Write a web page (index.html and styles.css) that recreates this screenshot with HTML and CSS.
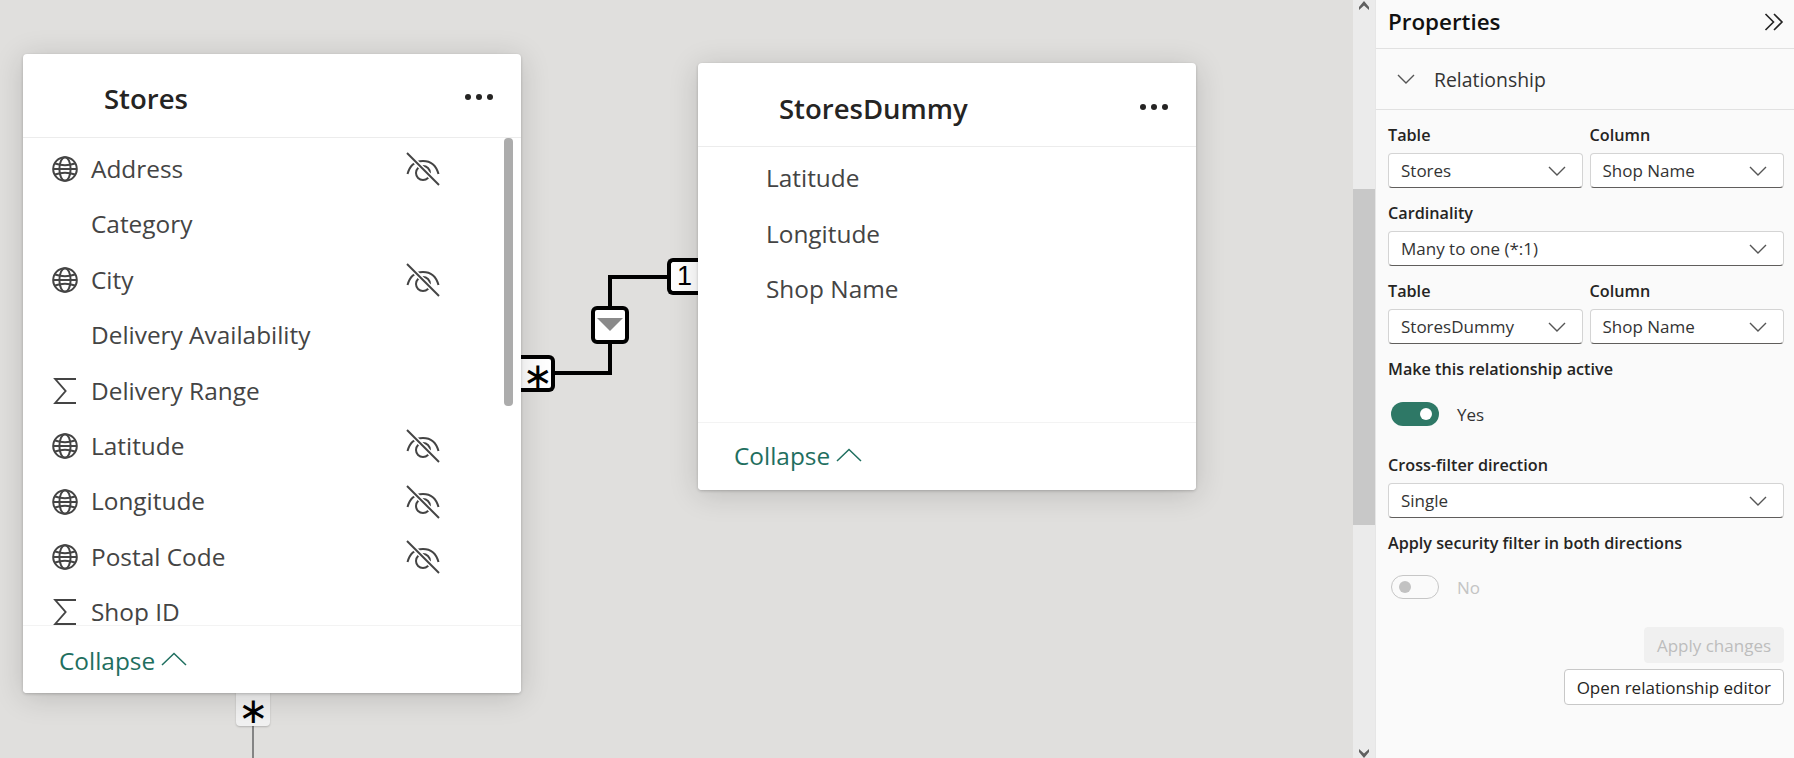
FILE: index.html
```html
<!DOCTYPE html>
<html lang="en">
<head>
<meta charset="utf-8">
<title>Model view - Properties</title>
<link rel="stylesheet" href="styles.css">
</head>
<body>
<svg class="defs" width="0" height="0" aria-hidden="true">
  <symbol id="globe" viewBox="0 0 26 26">
    <g fill="none" stroke="#444" stroke-width="2">
      <circle cx="13" cy="13" r="11.8"/>
      <ellipse cx="13" cy="13" rx="5.6" ry="11.8"/>
      <path d="M3 7.5C9 9.6 17 9.6 23 7.5M3 18.5C9 16.4 17 16.4 23 18.5M1.2 13H24.8"/>
    </g>
  </symbol>
  <symbol id="sigma" viewBox="0 0 22 26">
    <path d="M22 1H1.2L11.6 13 1.2 25H22" fill="none" stroke="#444" stroke-width="1.9"/>
  </symbol>
  <symbol id="hidden" viewBox="0 0 34 34">
    <g fill="none" stroke-width="2">
      <path d="M1.5 22C4 13 10 9 17 9s13 4 15.500 13" stroke="#444"/>
      <circle cx="17" cy="21" r="7" stroke="#444"/>
      <path d="M1 1l32 32" stroke="#fff" stroke-width="5"/>
      <path d="M1 1l32 32" stroke="#444"/>
    </g>
  </symbol>
  <symbol id="chev" viewBox="0 0 18 10">
    <path d="M1 1l8 8 8-8" fill="none" stroke="#555" stroke-width="1.4"/>
  </symbol>
  <symbol id="up" viewBox="0 0 26 14">
    <path d="M1 13L13 1.500 25 13" fill="none" stroke="#1f6f5f" stroke-width="1.5"/>
  </symbol>
</svg>

<div class="app">
  <main class="canvas">
    <svg class="links" width="1353" height="758" aria-hidden="true">
      <path class="link-bold" d="M555 373H610V277H667"/>
      <path class="link-thin" d="M253 726V758"/>
    </svg>

    <span class="badge badge-many">∗</span>
    <span class="badge badge-filter"><i class="tri"></i></span>
    <span class="badge badge-one">1</span>
    <span class="badge-idle">∗</span>

    <section class="card card-stores">
      <header class="card-head">
        <h2 class="card-title">Stores</h2>
        <span class="dots"><i></i><i></i><i></i></span>
      </header>
      <div class="card-list list-stores">
        <div class="row"><svg class="ic"><use href="#globe"/></svg><span class="name">Address</span><svg class="hid"><use href="#hidden"/></svg></div>
        <div class="row"><span class="ic"></span><span class="name">Category</span></div>
        <div class="row"><svg class="ic"><use href="#globe"/></svg><span class="name">City</span><svg class="hid"><use href="#hidden"/></svg></div>
        <div class="row"><span class="ic"></span><span class="name">Delivery Availability</span></div>
        <div class="row"><svg class="ic"><use href="#sigma"/></svg><span class="name">Delivery Range</span></div>
        <div class="row"><svg class="ic"><use href="#globe"/></svg><span class="name">Latitude</span><svg class="hid"><use href="#hidden"/></svg></div>
        <div class="row"><svg class="ic"><use href="#globe"/></svg><span class="name">Longitude</span><svg class="hid"><use href="#hidden"/></svg></div>
        <div class="row"><svg class="ic"><use href="#globe"/></svg><span class="name">Postal Code</span><svg class="hid"><use href="#hidden"/></svg></div>
        <div class="row"><svg class="ic"><use href="#sigma"/></svg><span class="name">Shop ID</span></div>
      </div>
      <span class="thumb"></span>
      <footer class="card-foot foot-stores"><span>Collapse</span><svg class="up"><use href="#up"/></svg></footer>
    </section>

    <section class="card card-dummy">
      <header class="card-head">
        <h2 class="card-title">StoresDummy</h2>
        <span class="dots"><i></i><i></i><i></i></span>
      </header>
      <div class="card-list list-dummy">
        <div class="row"><span class="ic"></span><span class="name">Latitude</span></div>
        <div class="row"><span class="ic"></span><span class="name">Longitude</span></div>
        <div class="row"><span class="ic"></span><span class="name">Shop Name</span></div>
      </div>
      <footer class="card-foot foot-dummy"><span>Collapse</span><svg class="up"><use href="#up"/></svg></footer>
    </section>
  </main>

  <div class="vscroll">
    <span class="arrow arrow-up"></span>
    <span class="vthumb"></span>
    <span class="arrow arrow-down"></span>
  </div>

  <aside class="panel">
    <header class="panel-head">
      <h1 class="panel-title">Properties</h1>
      <svg class="collapse-all" viewBox="0 0 20 18"><path d="M1.500 1l8 8-8 8M10 1l8 8-8 8" fill="none" stroke="#222" stroke-width="1.600"/></svg>
    </header>
    <div class="section-head">
      <svg class="section-chev"><use href="#chev"/></svg>
      <span>Relationship</span>
    </div>
    <form class="form">
      <div class="pair">
        <div class="field"><span class="label">Table</span><div class="select"><span>Stores</span><svg class="sel-chev"><use href="#chev"/></svg></div></div>
        <div class="field"><span class="label">Column</span><div class="select"><span>Shop Name</span><svg class="sel-chev"><use href="#chev"/></svg></div></div>
      </div>
      <div class="field"><span class="label">Cardinality</span><div class="select"><span>Many to one (*:1)</span><svg class="sel-chev"><use href="#chev"/></svg></div></div>
      <div class="pair">
        <div class="field"><span class="label">Table</span><div class="select"><span>StoresDummy</span><svg class="sel-chev"><use href="#chev"/></svg></div></div>
        <div class="field"><span class="label">Column</span><div class="select"><span>Shop Name</span><svg class="sel-chev"><use href="#chev"/></svg></div></div>
      </div>
      <span class="label">Make this relationship active</span>
      <div class="toggle-row toggle-row-on"><span class="toggle on"><i></i></span><span>Yes</span></div>
      <div class="field"><span class="label">Cross-filter direction</span><div class="select"><span>Single</span><svg class="sel-chev"><use href="#chev"/></svg></div></div>
      <span class="label">Apply security filter in both directions</span>
      <div class="toggle-row toggle-row-off"><span class="toggle off"><i></i></span><span>No</span></div>
      <div class="actions">
        <button type="button" class="btn btn-disabled">Apply changes</button>
        <button type="button" class="btn">Open relationship editor</button>
      </div>
    </form>
  </aside>
</div>
</body>
</html>
```

FILE: styles.css
```css
* { box-sizing: border-box; }
html, body { margin: 0; height: 100%; }
body { font-family: "Open Sans", "Noto Sans", sans-serif; color: #252423; overflow: hidden; }
.defs { position: absolute; }
.app { display: flex; height: 758px; width: 1794px; }

/* canvas */
.canvas { position: relative; width: 1353px; flex: none; background: #e0dfdd; overflow: hidden; }
.links { position: absolute; left: 0; top: 0; }
.link-bold { fill: none; stroke: #000; stroke-width: 4; }
.link-thin { fill: none; stroke: #666; stroke-width: 1.500; }

.badge { position: absolute; display: flex; align-items: center; justify-content: center; background: #fff; border: 4px solid #000; border-radius: 6px; color: #000; font-family: "Liberation Sans", sans-serif; }
.badge-many { left: 521px; top: 355px; width: 34px; height: 37px; border-left: 0; border-radius: 0 6px 6px 0; padding: 3px 0 0 3px; font-family: "DejaVu Sans", sans-serif; font-size: 36px; }
.badge-filter { left: 591px; top: 306px; width: 38px; height: 38px; align-items: flex-start; padding-top: 8px; }
.badge-one { left: 667px; top: 258px; width: 34px; height: 37px; border-right: 0; border-radius: 6px 0 0 6px; font-size: 27px; justify-content: flex-start; padding-left: 6px; }
.tri { display: block; width: 0; height: 0; border-left: 13px solid transparent; border-right: 13px solid transparent; border-top: 13px solid #8a8a8a; }
.badge-idle { position: absolute; left: 236px; top: 692px; width: 34px; height: 34px; display: flex; align-items: center; justify-content: center; padding-top: 3px; background: #f1f1f1; border-radius: 0 0 4px 4px; box-shadow: 0 1px 2px rgba(0,0,0,.2); font-family: "DejaVu Sans", sans-serif; font-size: 36px; color: #000; }

.card { position: absolute; width: 498px; background: #fff; border-radius: 4px; display: flex; flex-direction: column; box-shadow: 0 4px 30px rgba(0,0,0,.16), 0 1px 3px rgba(0,0,0,.2); }
.card-stores { left: 23px; top: 54px; height: 639px; }
.card-dummy { left: 698px; top: 63px; height: 427px; }

.card-head { flex: none; height: 84px; display: flex; align-items: center; justify-content: space-between; padding: 6px 28px 0 81px; border-bottom: 1px solid #ececec; }
.card-dummy .card-head { padding-top: 8px; }
.card-title { margin: 0; font-size: 27.500px; font-weight: 600; color: #252423; }
.dots { display: flex; gap: 5px; margin-bottom: 4px; }
.dots i { display: block; width: 6px; height: 6px; border-radius: 50%; background: #252423; }

.card-list { flex: 1; min-height: 0; }
.list-stores { padding-top: 3.500px; }
.list-dummy { padding-top: 4px; }
.row { height: 55.400px; display: flex; align-items: center; padding-left: 29px; font-size: 24.400px; color: #444; white-space: nowrap; }
.ic { flex: none; width: 26px; height: 26px; margin-right: 13px; }
.name { flex: none; width: 346px; line-height: 1; }
.hid { flex: none; width: 34px; height: 34px; margin-left: -31px; }
.thumb { position: absolute; left: 481px; top: 84px; width: 9px; height: 268px; background: #acacac; border-radius: 4px; }

.card-foot { flex: none; height: 68px; display: flex; align-items: center; gap: 6px; border-top: 1px solid #f3f3f3; font-size: 24.400px; color: #1f6f5f; background: #fff; border-radius: 0 0 4px 4px; position: relative; }
.foot-stores { padding: 1px 0 0 36px; }
.foot-dummy { padding: 0 0 2px 36px; }
.up { width: 26px; height: 14px; margin-bottom: 2px; }

/* app scrollbar */
.vscroll { flex: none; width: 22px; background: #ebebeb; position: relative; }
.vthumb { position: absolute; left: 0; top: 189px; width: 100%; height: 336px; background: #c8c8c8; }
.arrow { position: absolute; left: 6px; width: 10px; height: 10px; }
.arrow-up { top: 1px; background: #606060; clip-path: polygon(50% 0, 100% 60%, 100% 90%, 50% 45%, 0 90%, 0 60%); }
.arrow-down { bottom: 0; background: #606060; clip-path: polygon(0 10%, 50% 55%, 100% 10%, 100% 40%, 50% 100%, 0 40%); }

/* properties */
.panel { flex: none; width: 419px; background: #fafafa; border-left: 1px solid #e6e6e6; }
.panel-head { height: 49px; display: flex; align-items: center; justify-content: space-between; padding: 0 10px 5px 12px; border-bottom: 1px solid #e1e1e1; }
.panel-title { margin: 0; font-size: 22.400px; font-weight: 600; color: #111; }
.collapse-all { width: 20px; height: 18px; }
.section-head { height: 61px; display: flex; align-items: center; gap: 19px; padding-left: 21px; border-bottom: 1px solid #e1e1e1; font-size: 19.400px; color: #333; }
.section-chev { width: 18px; height: 10px; }

.form { padding: 14px 10px 0 12px; display: flex; flex-direction: column; }
.pair { display: flex; gap: 7px; }
.pair .field { flex: 1; }
.field { display: flex; flex-direction: column; }
.label { font-size: 16.200px; font-weight: 600; line-height: 22px; color: #252423; white-space: nowrap; }
.select { margin-top: 7px; margin-bottom: 14px; height: 35px; background: #fff; border: 1px solid #d4d4d4; border-bottom-color: #605e5c; border-radius: 4px; display: flex; align-items: center; justify-content: space-between; padding: 0 16px 0 12px; font-size: 17px; color: #333; }
.sel-chev { width: 18px; height: 10px; }
.toggle-row { display: flex; align-items: center; gap: 18px; height: 24px; font-size: 17px; padding-left: 3px; color: #333; }
.toggle-row-on { margin-top: 22px; margin-bottom: 28px; }
.toggle-row-off { margin-top: 21px; color: #c4c4c4; }
.toggle { display: flex; align-items: center; width: 48px; height: 24px; border-radius: 12px; }
.toggle i { display: block; width: 12px; height: 12px; border-radius: 50%; }
.toggle.on { background: #2e7866; justify-content: flex-end; padding-right: 7px; }
.toggle.on i { background: #fff; }
.toggle.off { border: 1px solid #c6c6c6; padding-left: 7px; }
.toggle.off i { background: #c2c2c2; }
.actions { margin-top: 28px; display: flex; flex-direction: column; align-items: flex-end; gap: 6px; }
.btn { height: 36px; padding: 0 12px; font: inherit; font-size: 17px; color: #252423; background: #fff; border: 1px solid #c8c8c8; border-radius: 4px; white-space: nowrap; }
.btn-disabled { width: 140px; padding: 0; background: #f0f0f0; border-color: #f0f0f0; color: #bdbdbd; }
```
